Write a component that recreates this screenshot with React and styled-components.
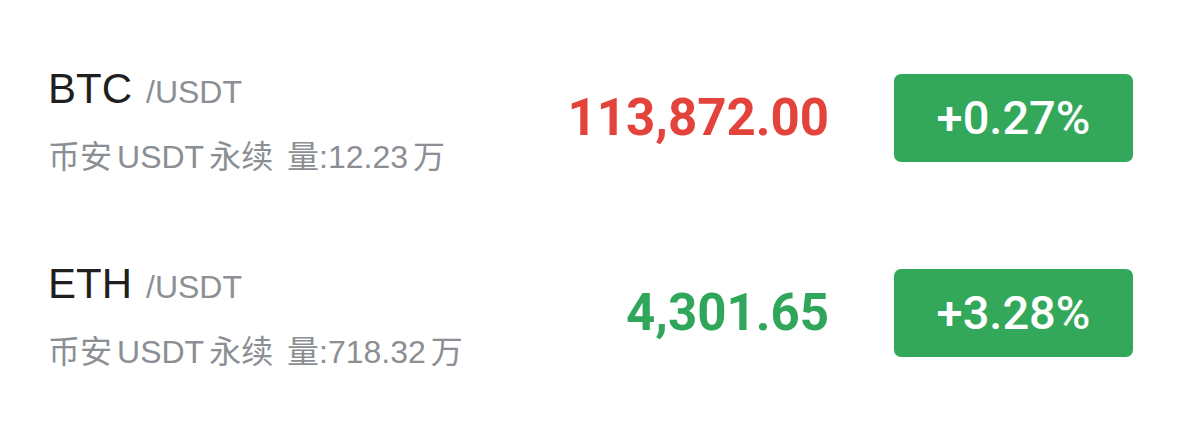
import React from "react";
import styled, { createGlobalStyle } from "styled-components";

const Global = createGlobalStyle`
  html, body { margin: 0; padding: 0; background: #ffffff; }
  body { font-family: "Liberation Sans", "Noto Sans CJK SC", sans-serif; }
`;

const List = styled.div`
  display: flex;
  flex-direction: column;
  padding: 20px 46px 0 48px;
  width: 1179px;
  box-sizing: border-box;
`;

const Row = styled.div`
  display: flex;
  align-items: center;
  height: 195px;
`;

const Info = styled.div`
  flex: 1;
  display: flex;
  flex-direction: column;
  padding-top: 6px;
`;

const Title = styled.div`
  display: flex;
  align-items: baseline;
  line-height: 48px;
`;

const Symbol = styled.span`
  font-family: "Liberation Sans", Arial, sans-serif;
  font-size: 42px;
  color: #1f1f1f;
`;

const Quote = styled.span`
  font-family: "Liberation Sans", Arial, sans-serif;
  font-size: 32px;
  color: #8c8f94;
  margin-left: 14px;
`;

const Meta = styled.div`
  margin-top: 21px;
  font-family: "Liberation Sans", "Noto Sans CJK SC", sans-serif;
  font-size: 32px;
  line-height: 40px;
  color: #8b8e93;
  white-space: nowrap;
  word-spacing: 5px;
`;

const Latin = styled.span`
  margin: 0 ${(p) => p.$gap}px;
`;

const Price = styled.div`
  font-family: Roboto, "Liberation Sans", sans-serif;
  font-weight: 700;
  font-size: 51px;
  color: ${(p) => (p.$up ? "#2fa65a" : "#e4433b")};
  text-align: right;
`;

const Badge = styled.div`
  margin-left: 65px;
  width: 239px;
  height: 88px;
  border-radius: 7px;
  background: #34a85a;
  color: #ffffff;
  display: flex;
  align-items: center;
  justify-content: center;
  font-family: Roboto, "Liberation Sans", sans-serif;
  font-size: 47px;
  font-weight: 500;
`;

const rows = [
  { sym: "BTC", vol: "12.23", price: "113,872.00", up: false, change: "+0.27%" },
  { sym: "ETH", vol: "718.32", price: "4,301.65", up: true, change: "+3.28%" },
];

export default function App() {
  return (
    <>
      <Global />
      <List>
        {rows.map((r) => (
          <Row key={r.sym}>
            <Info>
              <Title>
                <Symbol>{r.sym}</Symbol>
                <Quote>/USDT</Quote>
              </Title>
              <Meta>
                币安<Latin $gap={5}>USDT</Latin>永续 量:{r.vol}
                <Latin $gap={5}>万</Latin>
              </Meta>
            </Info>
            <Price $up={r.up}>{r.price}</Price>
            <Badge>{r.change}</Badge>
          </Row>
        ))}
      </List>
    </>
  );
}
